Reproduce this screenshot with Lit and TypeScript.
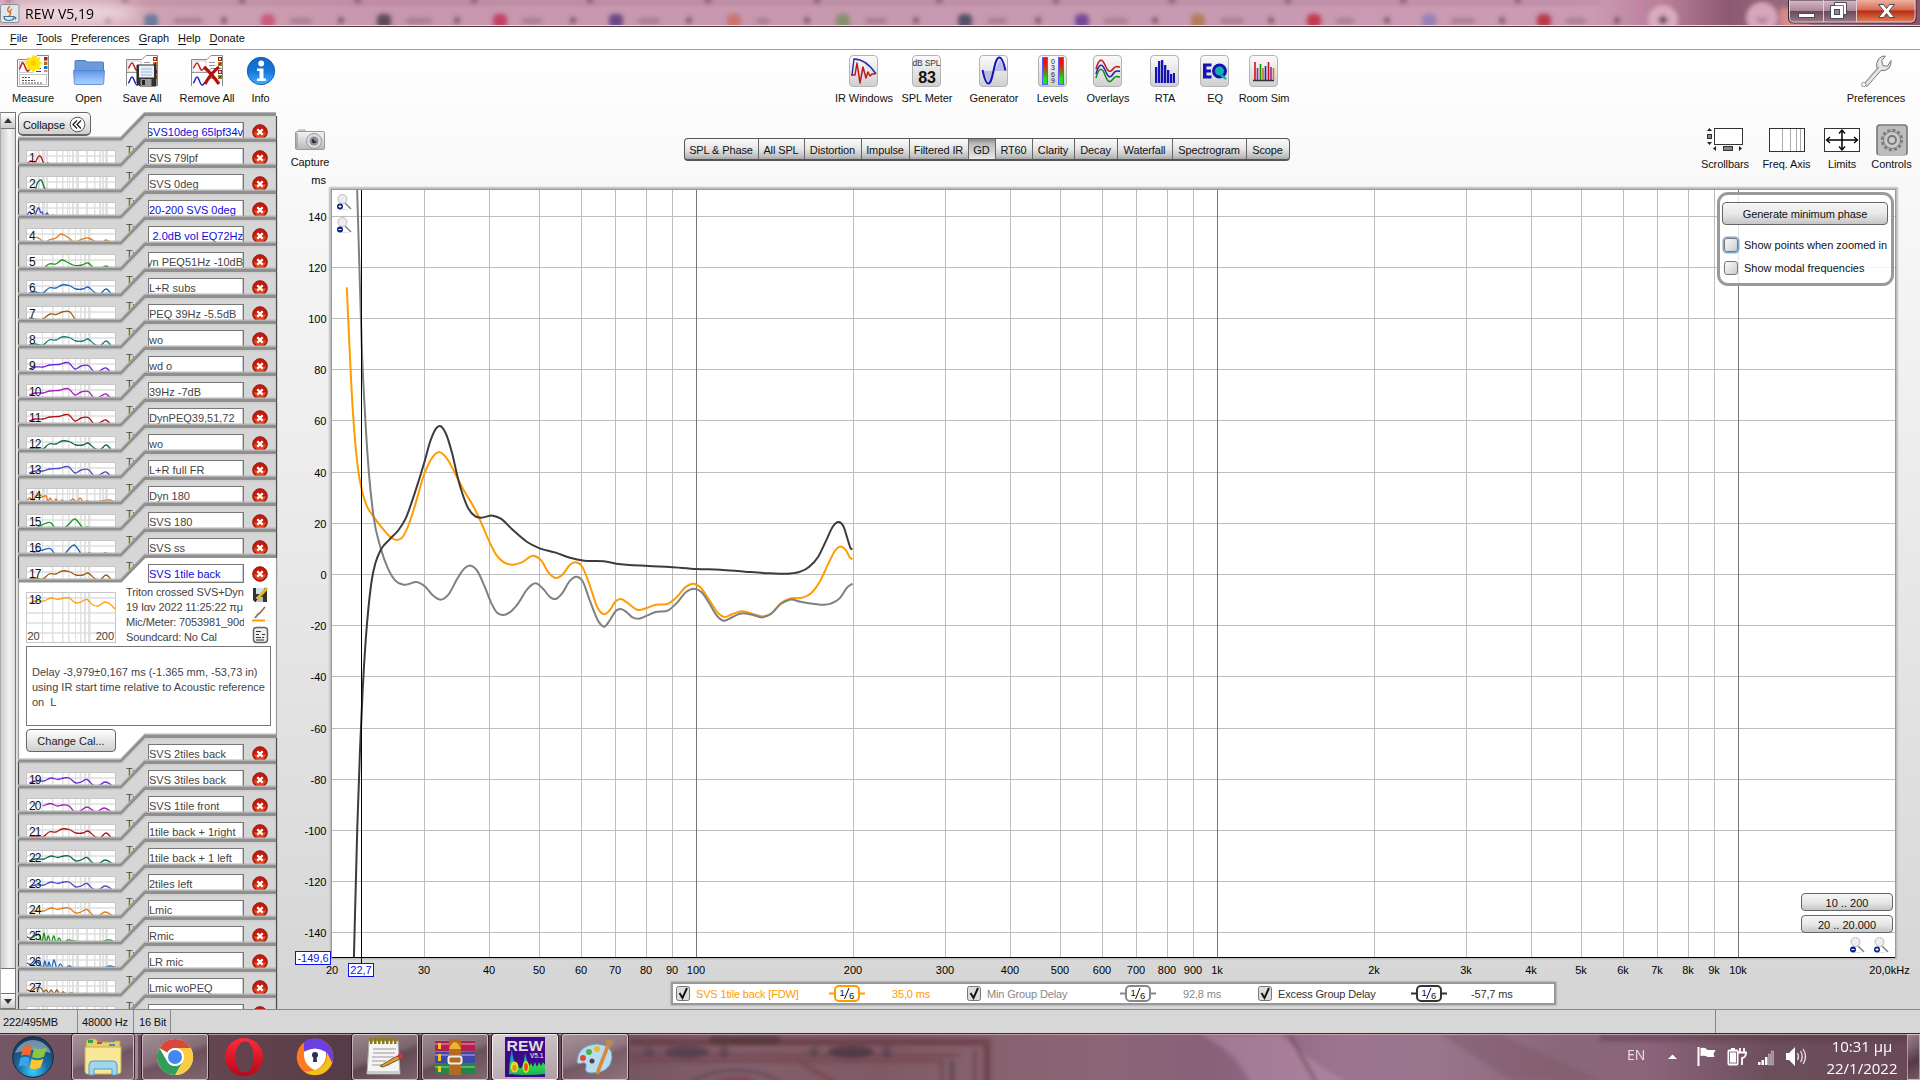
import { LitElement, html, svg, css } from "lit";
import { customElement, property } from "lit/decorators.js";

type Pt = [number, number];

/** Cubic Hermite curve through a flat list of coordinates with ascending x. */
function smooth(flat: number[]): string {
  const p: Pt[] = [];
  for (let i = 0; i < flat.length; i += 2) p.push([flat[i], flat[i + 1]]);
  const n = p.length;
  const slope = (i: number) => {
    if (i === 0) return (p[1][1] - p[0][1]) / (p[1][0] - p[0][0]);
    if (i === n - 1) return (p[i][1] - p[i - 1][1]) / (p[i][0] - p[i - 1][0]);
    const h0 = p[i][0] - p[i - 1][0], h1 = p[i + 1][0] - p[i][0];
    const d0 = (p[i][1] - p[i - 1][1]) / h0, d1 = (p[i + 1][1] - p[i][1]) / h1;
    return (d0 * h1 + d1 * h0) / (h0 + h1);
  };
  let d = `M${p[0][0]},${p[0][1]}`;
  for (let i = 0; i < n - 1; i++) {
    const b = p[i], c = p[i + 1], h = (c[0] - b[0]) / 3;
    d += `C${(b[0] + h).toFixed(2)},${(b[1] + h * slope(i)).toFixed(2)} ${(c[0] - h).toFixed(2)},${(c[1] - h * slope(i + 1)).toFixed(2)} ${c[0]},${c[1]}`;
  }
  return d;
}

/* ---------- measurement data ---------- */

const SHAPES: Record<string, number[][]> = {
  a: [[1, 14, 5, 11, 8, 14, 10, 11, 13, 6, 15, 7, 18, 14, 20, 15, 22, 13, 24, 16, 27, 15, 28, 17]],
  b: [[1, 16, 9, 15, 11, 8, 13, 5, 16, 5, 18, 11, 22, 15]],
  c: [[1, 13, 4, 10, 6, 14, 9, 13, 13, 6, 15, 11, 16, 10, 18, 15, 21, 11, 24, 16, 27, 13, 29, 16]],
  d: [[10, 9, 14, 11, 18, 15, 23, 12, 30, 10, 35, 6, 38, 7, 43, 10, 48, 14, 54, 12, 62, 10, 70, 14, 75, 16, 80, 12, 85, 15]],
  e: [[3, 14, 9, 14, 17, 14.5, 23, 10, 30, 10, 36, 6, 41, 8, 47, 11, 56, 11, 62, 9, 68, 14, 74, 15, 80, 12, 85, 15]],
  f: [[3, 13, 9, 12, 17, 13, 23, 8, 30, 8, 36, 5, 43, 5.5, 50, 9, 57, 9, 62, 7, 68, 12, 74, 14, 80, 9, 87, 16]],
  g: [[3, 12, 17, 13, 24, 8, 30, 8.5, 36, 6, 44, 6, 50, 14, 52, 15, 60, 15]],
  h: [[3, 11, 9, 9, 17, 9, 24, 7, 33, 6.5, 43, 5, 49, 11, 55, 8, 63, 8, 69, 15, 75, 12, 80, 10, 86, 16]],
  n: [[1, 12, 4, 10, 7, 12, 10, 8, 14, 7, 17, 9, 20, 8, 22, 13, 24, 10, 27, 15, 30, 11, 33, 15.5, 36, 12, 39, 15.5, 43, 14, 47, 11, 51, 14, 54, 10, 58, 15, 61, 13, 66, 15.5, 75, 13, 84, 12, 89, 14]],
  o: [[5, 15, 12, 13, 18, 10, 25, 9, 30, 16], [37, 16, 43, 10, 49, 5, 53, 9, 57, 14, 61, 13, 66, 16], [76, 15.5, 80, 15, 84, 15.5]],
  p: [[3, 16, 9, 12, 17, 10, 25, 9, 30, 16], [37, 16, 43, 9, 48, 5, 52, 9, 56, 16], [59, 15.5, 63, 13, 68, 16], [74, 16, 79, 13, 85, 16]],
  q: [[3, 11, 9, 9, 18, 9, 25, 6, 32, 7.5, 38, 6, 43, 6, 50, 11, 55, 10, 61, 7.5, 67, 13, 72, 14, 79, 10, 84, 12, 89, 17]],
  r: [[17, 8, 24, 5.5, 32, 8, 36, 7, 43, 8, 49, 14, 52, 14, 61, 9, 70, 14, 78, 10, 87, 15]],
  s: [[1, 9, 6, 10, 10, 7, 14, 8, 16, 15, 18, 5, 20, 15, 22, 8, 25, 15.5, 28, 8, 30, 15, 33, 10, 36, 15, 42, 12, 48, 13, 58, 15.5], [73, 15.5, 78, 13, 84, 12, 89, 14]],
  t: [[1, 9, 6, 11, 10, 8, 14, 10, 17, 14, 19, 7, 21, 15.5, 23, 8, 25, 15, 28, 6, 31, 15, 34, 10, 38, 15, 43, 12, 50, 15.5, 56, 14, 62, 15.5], [73, 15.5, 80, 13, 84, 12, 89, 13]],
  u: [[1, 10, 6, 11, 10, 8, 15, 8, 18, 12, 20, 10, 23, 13, 25, 10, 28, 14, 31, 10, 34, 15, 37, 12, 41, 15, 45, 13, 50, 15, 58, 16], [80, 15.5, 84, 15]],
};

const RED = "#b30f14", GREEN = "#0c6b3e", INDIGO = "#4c49c4", ORANGE = "#e07b12", LIME = "#109a14", BLUE = "#1466bf", BROWN = "#9c5a12", TEAL = "#15807c", VIOLET = "#6d22dc", MAGENTA = "#a81bbd", AMBER = "#ff9e0a";

interface Measurement { n: number; name: string; color: string; shape: string; wide?: boolean; changed?: boolean; end?: boolean; open?: boolean; }

const M = (n: number, name: string, color: string, shape: string, o: Partial<Measurement> = {}): Measurement => ({ n, name, color, shape, ...o });

const MEASUREMENTS: Measurement[] = [
  M(1, "SVS10deg 65lpf34v", RED, "a", { wide: true, changed: true, end: true }),
  M(2, "SVS 79lpf", GREEN, "b", { wide: true }),
  M(3, "SVS 0deg", INDIGO, "c", { wide: true }),
  M(4, "20-200 SVS 0deg", ORANGE, "d", { changed: true }),
  M(5, "n 2.0dB vol EQ72Hz", LIME, "e", { changed: true, end: true }),
  M(6, "Dyn PEQ51Hz -10dB", BLUE, "f", { end: true }),
  M(7, "L+R subs", BROWN, "g"),
  M(8, "PEQ 39Hz -5.5dB", TEAL, "f"),
  M(9, "wo", VIOLET, "h"),
  M(10, "wd o", MAGENTA, "h"),
  M(11, "39Hz -7dB", RED, "h"),
  M(12, "DynPEQ39,51,72", GREEN, "f"),
  M(13, "wo", INDIGO, "h"),
  M(14, "L+R full FR", ORANGE, "n", { wide: true }),
  M(15, "Dyn 180", LIME, "o"),
  M(16, "SVS 180", BLUE, "p"),
  M(17, "SVS ss", BROWN, "f"),
  M(18, "SVS 1tile back", AMBER, "q", { changed: true, open: true }),
  M(19, "SVS 2tiles back", VIOLET, "q"),
  M(20, "SVS 3tiles back", MAGENTA, "r"),
  M(21, "SVS 1tile front", RED, "f"),
  M(22, "1tile back + 1right", GREEN, "q"),
  M(23, "1tile back + 1 left", INDIGO, "q"),
  M(24, "2tiles left", ORANGE, "q"),
  M(25, "Lmic", LIME, "s", { wide: true }),
  M(26, "Rmic", BLUE, "t", { wide: true }),
  M(27, "LR mic", BROWN, "u", { wide: true }),
  M(28, "Lmic woPEQ", TEAL, "", { wide: true }),
  M(29, "", RED, ""),
];

const TRACE_GD = [75, 322, 80, 440, 87, 600, 95, 740, 105, 855, 117, 930, 130, 975, 150, 1010, 175, 1045, 200, 1074, 214, 1080, 230, 1073, 248, 1035, 265, 980, 290, 888, 310, 840, 333, 816, 355, 835, 385, 895, 405, 935, 430, 980, 450, 1025, 475, 1087, 495, 1127, 515, 1147, 540, 1154, 565, 1147, 598, 1127, 620, 1142, 640, 1178, 660, 1194, 680, 1183, 700, 1154, 716, 1147, 733, 1158, 755, 1215, 778, 1285, 796, 1303, 812, 1290, 828, 1264, 842, 1257, 860, 1268, 890, 1290, 915, 1284, 940, 1274, 975, 1271, 1000, 1250, 1025, 1220, 1045, 1211, 1065, 1222, 1090, 1260, 1115, 1300, 1132, 1311, 1155, 1302, 1180, 1294, 1210, 1301, 1242, 1309, 1265, 1300, 1290, 1270, 1315, 1256, 1350, 1253, 1375, 1240, 1400, 1204, 1425, 1147, 1445, 1108, 1460, 1100, 1473, 1111, 1484, 1133, 1491, 1138];
const TRACE_MIN = [104, 29, 110, 250, 117, 500, 127, 720, 137, 880, 150, 1010, 170, 1105, 190, 1165, 210, 1201, 235, 1214, 275, 1207, 295, 1220, 315, 1245, 337, 1259, 360, 1243, 385, 1195, 405, 1165, 422, 1157, 440, 1172, 460, 1217, 480, 1270, 495, 1297, 511, 1305, 530, 1298, 555, 1270, 580, 1228, 604, 1210, 625, 1227, 645, 1252, 660, 1257, 678, 1240, 700, 1202, 719, 1190, 735, 1203, 755, 1260, 780, 1325, 796, 1340, 812, 1320, 828, 1293, 842, 1287, 858, 1296, 875, 1312, 892, 1316, 915, 1307, 940, 1296, 975, 1291, 1000, 1268, 1025, 1236, 1047, 1226, 1068, 1236, 1090, 1270, 1112, 1308, 1130, 1322, 1150, 1314, 1175, 1301, 1210, 1304, 1240, 1312, 1262, 1302, 1290, 1272, 1315, 1259, 1345, 1265, 1380, 1271, 1430, 1271, 1455, 1255, 1478, 1220, 1491, 1211];
const TRACE_EXCESS = [95, 2331, 104.5, 1940, 112, 1710, 119.5, 1530, 128, 1380, 136, 1280, 145, 1200, 155, 1150, 170, 1110, 195, 1078, 220, 1050, 240, 1015, 265, 940, 290, 855, 310, 780, 325, 745, 336, 738, 350, 755, 370, 820, 385, 890, 400, 945, 415, 985, 435, 1009, 448, 1013, 484, 1007, 505, 1015, 540, 1050, 580, 1086, 615, 1105, 660, 1118, 700, 1133, 740, 1142, 795, 1144, 830, 1151, 920, 1158, 980, 1161, 1055, 1167, 1120, 1169, 1190, 1175, 1260, 1180, 1310, 1181, 1345, 1175, 1370, 1160, 1395, 1130, 1420, 1075, 1437, 1038, 1453, 1026, 1466, 1040, 1478, 1080, 1486, 1105, 1491, 1108];

/* ---------- toolbar glyphs ---------- */

const plate = svg`<rect x="1.500" y=".5" width="28" height="31" rx="3.500" fill="url(#plate)" stroke="#b4b4b4"/>`;
const plateDef = svg`<defs><linearGradient id="plate" x2="0" y2="1"><stop offset="0" stop-color="#fbfbfb"/><stop offset="1" stop-color="#cfcfcf"/></linearGradient></defs>`;

const chips = (y: number) => svg`
  <rect x="27" y=${y} width="4" height="4" fill="#b01818"/><rect x="27" y=${y + 5} width="4" height="4" fill="#a87a08"/>
  <path d=${`M28 ${y + 1}l2 2M30 ${y + 1}l-2 2`} stroke="#fff" stroke-width=".8"/><path d=${`M28 ${y + 8}l2-2`} stroke="#222"/>`;

const stackedCards = svg`
  <path d="M.5 31V4.500H16l4-4H31.500V31" fill="#fff" stroke="#888"/>
  <path d="M.5 17.500H16l4-4H31.500" fill="none" stroke="#888"/>
  <rect x="2" y="6" width="13" height="11" fill="#fff" stroke="#bbb" stroke-width=".7"/>
  <path d="M2 13c2 0 2-5 4-5s3 8 5 7 2-3 4-3" fill="none" stroke="#d02020" stroke-width="1.500"/>
  <path d="M2 28c2 0 2-6 4-6s3 8 5 8 2-3 4-3" fill="none" stroke="#2222c0" stroke-width="1.500"/>
  <path d="M18 7.500h6M18 10.500h6M18 23.500h6" stroke="#999"/>
  ${chips(2)}${chips(15)}`;

const ICONS: Record<string, unknown> = {
  measure: svg`
    <path d="M.5 31.500V4.500H16l4-4H31.500V31.500z" fill="#fff" stroke="#888"/>
    <rect x="2.500" y="6.500" width="14" height="11" fill="#fff" stroke="#ccc"/>
    <path d="M2 14c2 0 2-7 4-6s3 9 5 8 3-6 5-5" fill="none" stroke="#c81e1e" stroke-width="1.600"/>
    <path d="M19 13.500h5M19 16.500h5" stroke="#444"/>
    <rect x="2.500" y="19.500" width="27" height="10" fill="#fff" stroke="#c4c4c4"/>
    <path d="M5 22.500h8M5 25.500h13M5 28h20" stroke="#555" stroke-dasharray="2 1"/>
    <rect x="27" y="2" width="3.500" height="3.500" fill="#b01818"/><rect x="27" y="6.500" width="3.500" height="3.500" fill="#a87a08"/><rect x="27" y="11" width="3.500" height="3" fill="#1773c8"/><path d="M27 16h3.500" stroke="#c03"/>
    <path d="M16.500 1l1.800 3.300 3.800-1-1 3.700 2.900 1.500-2.900 1.800 1 3.700-3.800-.9-1.800 3-1.900-3-3.700.9.900-3.700-2.900-1.800 2.900-1.500-.9-3.700 3.700 1z" fill="#ffe600" stroke="#ffe600" stroke-width="2" stroke-linejoin="round"/>
    <circle cx="16.500" cy="8" r="2.600" fill="#ffc800"/>`,
  open: svg`
    <defs><linearGradient id="fo" x2="0" y2="1"><stop offset="0" stop-color="#5e93e2"/><stop offset=".5" stop-color="#8ab8f6"/><stop offset="1" stop-color="#a9d0ff"/></linearGradient></defs>
    <path d="M2 18V6.500Q2 5.500 3 5.500H12q1 0 1.500 1.500h16q1 0 1 1V18z" fill="#6c9bdc" stroke="#4b7cc4"/>
    <path d="M.5 15.500h31l-.8 12.500q-.1 1.500-1.500 1.500H2.800q-1.400 0-1.500-1.500z" fill="url(#fo)" stroke="#4b7fd0" stroke-width=".8"/>`,
  saveall: svg`${stackedCards}
    <path d="M11 10h19v21H14l-3-3z" fill="#333" stroke="#222"/><rect x="13" y="10.500" width="15" height="12" fill="#e9f0fa"/>
    <path d="M15 14h11M15 17h11M15 20h11" stroke="#9db8d8"/><rect x="14.500" y="24" width="11" height="7" fill="#9a9a9a"/><rect x="16" y="25" width="3" height="5" fill="#222"/>`,
  removeall: svg`${stackedCards}<path d="M13 12q7 6 15 17M28 12q-8 6-14 17" fill="none" stroke="#b30f0f" stroke-width="3.200"/>`,
  info: svg`
    <defs><linearGradient id="inf" x2="0" y2="1"><stop offset="0" stop-color="#1666c4"/><stop offset=".5" stop-color="#1477dc"/><stop offset="1" stop-color="#3fb0ff"/></linearGradient></defs>
    <circle cx="16" cy="16" r="13.700" fill="url(#inf)" stroke="#1560b0"/><circle cx="16.200" cy="8.500" r="2.900" fill="#fff"/><path d="M12 13.500h6.500v10H21V26H12v-2.500h2.500v-7.500H12z" fill="#fff"/>`,
  ir: svg`${plate}<path d="M3 20h1l2-16q12 0 22 15" fill="none" stroke="#2a2ab4" stroke-width="1.400"/><path d="M4 20h3l2-12 3 20 3-16 3 11 2-6 2 4 2-2h3" fill="none" stroke="#c31616" stroke-width="1.500" stroke-linejoin="round"/>`,
  spl: svg`${plate}<text x="15.500" y="10.500" font-size="8.500" text-anchor="middle" textLength="28" fill="#333">dB SPL</text><text x="16" y="28" font-size="16" font-weight="700" text-anchor="middle" fill="#111">83</text>`,
  gen: svg`${plate}<path d="M5 16h11l-5 12z" fill="#b9bce0"/><path d="M16 16h11L22 4z" fill="#b9bce0"/><path d="M4.500 15q3 14 6 13.500c5-.5 5-26 11-26q3 0 6 13" fill="none" stroke="#1414c0" stroke-width="2"/>`,
  levels: svg`${plate}<defs><linearGradient id="lv" x2="0" y2="1"><stop offset=".2" stop-color="#f01010"/><stop offset=".55" stop-color="#7c7c10"/><stop offset=".8" stop-color="#10e818"/></linearGradient></defs>
    <rect x="5.500" y="2.500" width="5" height="27" fill="url(#lv)" stroke="#5a5aff"/><rect x="21.500" y="2.500" width="5" height="27" fill="url(#lv)" stroke="#5a5aff"/>
    <g font-size="7" text-anchor="middle" fill="#222"><text x="16" y="8.500">0</text><text x="16" y="15">3</text><text x="16" y="21.500">6</text><text x="16" y="28">9</text></g>`,
  overlays: svg`${plate}<g fill="none" stroke-width="1.500"><path d="M4 14c3-11 6-11 9-4s5 8 8 4 4-2 7-2" stroke="#c31616"/><path d="M4 19c3-11 6-11 9-4s5 9 8 4 4-2 7-3" stroke="#2222b8"/><path d="M4 23c3-11 6-11 9-3s5 8 8 4 4-2 7-2" stroke="#109010"/></g>`,
  rta: svg`${plate}<g fill="#1414b4"><rect x="6" y="12" width="2.300" height="16"/><rect x="9" y="6" width="2.300" height="22"/><rect x="12" y="5" width="2.300" height="23"/><rect x="15" y="10" width="2.300" height="18"/><rect x="18" y="15" width="2.300" height="13"/><rect x="21" y="19" width="2.300" height="9"/><rect x="24" y="18" width="2" height="10"/></g>`,
  eq: svg`${plate}<path d="M4 8.500h8.500v3H7.500v3h4.500v3H7.500v3h5v3H4z" fill="#1414b0"/><circle cx="20.500" cy="16" r="6" fill="#10b0b0" stroke="#1414b0" stroke-width="3"/><path d="M22 20l5 4" stroke="#10b0b0" stroke-width="2.500"/>`,
  room: svg`${plate}<path d="M5 25.500h21" stroke="#333" stroke-width="1.500"/><g stroke-width="1.600"><path d="M7 7v18" stroke="#c01818"/><path d="M9.500 13v12" stroke="#b010b0"/><path d="M12.500 9v16" stroke="#109010"/><path d="M15 13v12" stroke="#c07810"/><path d="M17.500 11v14" stroke="#2020b8"/><path d="M20.500 7v18" stroke="#c01818"/><path d="M23 12v13" stroke="#b010b0"/><path d="M25.500 13v12" stroke="#c08810"/></g>`,
  wrench: svg`<path d="M2.500 31L17 13.500Q15.500 8.500 18.500 4q3-3.500 7-3l-3.800 4.700 1.300 5 4.600.3L31 5.500q.5 4.500-2 7.500-3.500 3.500-8 2.500L6.500 32" fill="#e6e6e6" stroke="#777" stroke-width="1"/><path d="M5 28L19 12" stroke="#aaa" stroke-width="1.400"/><circle cx="3.800" cy="29.500" r="2.200" fill="#fff" stroke="#777" stroke-width=".8"/>`,
};

const glyph = (name: string) => html`<svg class="glyph" width="32" height="32" viewBox="0 0 32 32">${plateDef}${ICONS[name]}</svg>`;

/* ---------- one measurement card ---------- */

@customElement("measurement-card")
class MeasurementCard extends LitElement {
  @property({ attribute: false }) item!: Measurement;

  static styles = css`
    :host { display: block; position: relative; height: 26px; font: 11px "Liberation Sans", Arial, sans-serif; color: #444; }
    :host([open]) { height: 180px; }
    .shape { position: absolute; left: 0; top: 0; overflow: visible; pointer-events: none; }
    .content { position: relative; padding: 7px 8px 0 130px; }
    .tab { display: flex; gap: 8px; align-items: center; }
    .name { box-sizing: border-box; width: 96px; height: 19px; border: 1px solid #777; box-shadow: inset -1px -1px #ccc; background: #fff; display: flex; align-items: center; overflow: hidden; white-space: nowrap; }
    .name.end { justify-content: flex-end; }
    .changed { color: #0b0be0; }
    .details { display: flex; margin: 3px -1px 0 -22px; height: 58px; justify-content: space-between; }
    .lines { width: 118px; overflow: hidden; white-space: nowrap; line-height: 15px; margin-top: -1px; letter-spacing: -.12px; }
    .tools { width: 17px; margin-top: 1px; }
    .notes { box-sizing: border-box; margin: 2px -3px 0 -122px; width: 245px; height: 80px; border: 1px solid #777; padding: 18px 5px 0; line-height: 15px; white-space: pre; }
    .cal { margin: 3px 0 0 -122px; box-sizing: border-box; width: 90px; height: 23px; border: 1px solid #666; border-radius: 4px; background: linear-gradient(#fff, #cfcfcf); color: #222; display: flex; align-items: center; justify-content: center; }
  `;

  private thumb(m: Measurement) {
    const h = m.open ? 50 : 17;
    const bars = m.wide
      ? [[8, 1], [10, 1], [12, 2], [16, 3], [20, 2], [30, 1.5], [36, 1.5], [41, 1], [43, 1], [46, 2], [50, 3], [60, 2], [68, 1.5], [73, 2], [76, 2], [79, 3]]
      : [[16, 1], [26, 1.5], [36, 1.5], [42, 1.5], [49, 1], [54, 1.5], [58, 2], [62, 2.5]];
    return svg`
      <g transform="translate(8,35)">
        <rect x=".5" y=".5" width="89" height=${h} fill="#fff" stroke="#c6c6c6"/>
        ${bars.map(([x, w]) => svg`<rect x=${x} y="1" width=${w} height=${h - 1} fill="#e1e1e1"/>`)}
        <path d="M1 6H89${m.open ? "M1 21H89M1 31H89M1 41H89" : ""}" stroke="#dedede" stroke-width="1.500"/>
        ${m.open ? svg`<text x="1.500" y="48" font-size="11" fill="#444">20</text><text x="88" y="48" font-size="11" text-anchor="end" fill="#444">200</text>` : ""}
        ${(SHAPES[m.shape] ?? []).map((s) => svg`<path d=${smooth(s)} fill="none" stroke=${m.color} stroke-width="1.300"/>`)}
        ${m.shape ? svg`<text x="3" y="12" font-size="12" fill="#111" textLength=${m.n > 9 ? 12.5 : 6}>${m.n}</text>` : ""}
        ${m.n < 11 ? svg`<path d="M3 13.500h${m.n > 9 ? 12 : 6}" stroke="#111" stroke-width=".8"/>` : ""}
      </g>`;
  }

  render() {
    const m = this.item;
    const bottom = m.open ? 205 : 51;
    const edge = "M0,25H103L127,0H258";
    return html`
      <svg class="shape" width="258" height=${bottom}>
        <path d=${edge} transform="translate(0,-2.500)" fill="none" stroke="#b4b4b4" stroke-width="2"/>
        <path d=${edge} transform="translate(0,-.5)" fill="none" stroke="#8f8f8f" stroke-width="3"/>
        <path d=${`M1,25.500H103.500L127.500,1H258V${bottom}H1Z`} fill=${m.open ? "#fff" : "#d6d6d6"}/>
        <path d=${`M.5,25V${bottom}M258.500,1V${bottom}`} stroke=${m.open ? "#999" : "#4c4c4c"} stroke-width="1.200"/>
        <path d=${m.open ? "M0 0" : "M1.5,26.500H104L128,2H257"} fill="none" stroke="#c8c8c8"/>
        ${this.thumb(m)}
        ${m.open ? "" : svg`<text x="108" y="39" font-size="11" fill="#4c4c4c">Tri</text>`}
      </svg>
      <div class="content">
        <div class="tab">
          <div class="name ${m.end ? "end" : ""} ${m.changed ? "changed" : ""}">${m.name}</div>
          <svg width="16" height="16" viewBox="0 0 16 16">
            <circle cx="8" cy="8" r="7.300" fill="#c4190d" stroke="#8e1d10"/><path d="M2 8a6 6 0 0 0 12 0z" fill="#e2461d"/>
            <path d="M5.300 5.300l5.400 5.400M10.700 5.300l-5.400 5.400" stroke="#fff" stroke-width="2.300"/>
          </svg>
        </div>
        ${m.open ? html`
          <div class="details">
            <div class="lines">Triton crossed SVS+Dyn<br/>19 Ιαν 2022 11:25:22 πμ<br/>Mic/Meter: 7053981_90d<br/>Soundcard: No Cal</div>
            <svg class="tools" height="58" viewBox="0 0 17 58">
              <path d="M1 1h14v14H3L1 13z" fill="#333"/><rect x="4" y="1" width="8" height="6" fill="#cfe0ef"/><rect x="4" y="10" width="7" height="5" fill="#bbb"/><path d="M15 1L5 12" stroke="#e8b820" stroke-width="3"/><path d="M5 12l-2 2" stroke="#222" stroke-width="1.500"/>
              <path d="M13 20l-6 7" stroke="#b05050" stroke-width="1.500"/><path d="M7 26l-4 5" stroke="#777" stroke-width="2"/><path d="M0 33.500h13" stroke="#ff9a00" stroke-width="2"/>
              <rect x="1.500" y="40.500" width="14" height="15" rx="3" fill="#eee" stroke="#666" stroke-width="1.500"/><path d="M4 44.500h5M4 47.500h3M4 50.500h5M4 53h8M10 47.500h3M10 50.500h2" stroke="#333"/>
            </svg>
          </div>
          <div class="notes">Delay -3,979±0,167 ms (-1.365 mm, -53,73 in)
using IR start time relative to Acoustic reference
on  L</div>
          <div class="cal">Change Cal...</div>` : ""}
      </div>`;
  }
}

/* ---------- group delay chart ---------- */

const OX = 280, OY = 172;
const fx = (f: number) => Math.round(332 + 521 * Math.log10(f / 20)) - OX + 0.5;
const fy = (v: number) => Math.floor(574.5 - v * 2.5585) - OY + 0.5;

@customElement("delay-chart")
class DelayChart extends LitElement {
  static styles = css`
    :host { display: block; position: relative; width: 1640px; height: 805px; font: 11px "Liberation Sans", Arial, sans-serif; color: #111; }
    .canvas { display: block; }
    .panel { position: absolute; right: 26px; top: 20px; box-sizing: border-box; width: 177px; height: 94px; border: 3px solid #9a9a9a; border-radius: 11px; background: rgba(255,255,255,.82); padding: 7px 0 0 2px; display: flex; flex-direction: column; }
    .btn { box-sizing: border-box; border: 1px solid #666; border-radius: 4px; background: linear-gradient(#f6f6f6, #e8e8e8 50%, #c6c6c6); display: flex; align-items: center; justify-content: center; letter-spacing: -.1px; }
    .gen { width: 166px; height: 23px; margin-bottom: 8px; }
    .opt { display: flex; align-items: center; gap: 6px; height: 23px; padding-left: 2px; white-space: nowrap; }
    .box { box-sizing: border-box; width: 14px; height: 14px; border: 1px solid #777; border-radius: 3px; background: linear-gradient(135deg, #fafafa, #ccc); }
    .box.focus { box-shadow: 0 0 0 1.500px #79aee0; }
    .ranges { position: absolute; right: 27px; top: 721px; display: flex; flex-direction: column; gap: 4px; align-items: flex-end; }
    .range { width: 92px; height: 18px; padding-top: 2px; letter-spacing: 0; }
    .zooms { display: flex; gap: 9px; padding-right: 4px; }
    .vzooms { position: absolute; left: 57px; top: 22px; display: flex; flex-direction: column; gap: 7px; }
  `;

  private zoom(plus: boolean) {
    return html`<svg width="15" height="16" viewBox="0 0 15 16"><path d="M8 9l6 6" stroke="#888" stroke-width="1.600"/><path d="M2 15.500h9" stroke="#e2e2e2"/><circle cx="5.500" cy="5" r="4.500" fill="#ececf2" stroke="#bbb"/><circle cx="3" cy="12.500" r="3" fill="#0b2384"/><path d=${plus ? "M1.5 12.5h3M3 11v3" : "M1.5 12.5h3"} stroke="#fff" stroke-width="1"/></svg>`;
  }

  render() {
    const freqs: number[] = [];
    for (const dec of [10, 100, 1000, 10000]) for (let i = 1; i < 10; i++) { const f = i * dec; if (f > 20 && f < 20000) freqs.push(f); }
    const ys = [140, 120, 100, 80, 60, 40, 20, 0, -20, -40, -60, -80, -100, -120, -140];
    const x0 = 332 - OX, x1 = 1895 - OX, y0 = 190 - OY, y1 = 957 - OY;
    const label = (f: number) => (f >= 1000 ? `${f / 1000}k` : `${f}`);
    return html`
      <svg class="canvas" width="1640" height="805">
        <text x="46" y="12" text-anchor="end" font-size="11">ms</text>
        <rect x=${x0 - 3.5} y=${y0 - 3.5} width="1570" height="774" rx="2" fill="#dadada"/>
        <rect x=${x0 - 2.5} y=${y0 - 2.5} width="1568" height="772" rx="1" fill="#bdbdbd"/>
        <rect x=${x0 - 1} y=${y0 - 1} width="1565" height="769" fill="#9a9a9a"/>
        <rect x=${x0} y=${y0} width=${x1 - x0} height=${y1 - y0} fill="#fff"/>
        ${ys.map((v) => svg`<path d=${`M${x0} ${fy(v)}H${x1}`} stroke="#bdbdbd"/><text x="46.500" y=${fy(v) + 4.5} text-anchor="end">${v}</text>`)}
        ${freqs.map((f) => svg`<path d=${`M${fx(f)} ${y0}V${y1}`} stroke=${[100, 1000, 10000].includes(f) ? "#777" : "#bdbdbd"}/><text x=${fx(f) - 0.5} y="802" text-anchor="middle">${label(f)}</text>`)}
        <text x="52" y="802" text-anchor="middle">20</text>
        <text x="1609.500" y="802" text-anchor="middle">20,0kHz</text>
        <svg x="40" y="8" width="560" height="777" viewBox="0 0 1568 2331" preserveAspectRatio="none">
          <g fill="none" stroke-width="2">
            <path vector-effect="non-scaling-stroke" d=${smooth(TRACE_GD)} stroke="#ff9c00"/>
            <path vector-effect="non-scaling-stroke" d=${smooth(TRACE_MIN)} stroke="#808080"/>
            <path vector-effect="non-scaling-stroke" d=${smooth(TRACE_EXCESS)} stroke="#3c3c3c"/>
          </g>
        </svg>
        <path d="M81.500 18V791M52 785.500H1615" stroke="#000"/>
        <rect x="15.500" y="779.500" width="35" height="13" fill="#fff" stroke="#1010e8"/><text x="33" y="790" text-anchor="middle" fill="#1010e8">-149,6</text>
        <rect x="68.500" y="791.500" width="25" height="13" fill="#fff" stroke="#1010e8"/><text x="81" y="802" text-anchor="middle" fill="#1010e8">22,7</text>
      </svg>
      <div class="vzooms">${this.zoom(true)}${this.zoom(false)}</div>
      <div class="panel">
        <div class="btn gen">Generate minimum phase</div>
        <div class="opt"><span class="box focus"></span>Show points when zoomed in</div>
        <div class="opt"><span class="box"></span>Show modal frequencies</div>
      </div>
      <div class="ranges">
        <div class="btn range">10 .. 200</div>
        <div class="btn range">20 .. 20.000</div>
        <div class="zooms">${this.zoom(false)}${this.zoom(true)}</div>
      </div>`;
  }
}

/* ---------- application ---------- */

@customElement("app-root")
class AppRoot extends LitElement {
  static styles = css`
    :host { display: flex; flex-direction: column; width: 1920px; height: 1080px; overflow: hidden; font: 11px "Liberation Sans", Arial, sans-serif; color: #111; }
    .titlebar { position: relative; height: 27px; box-sizing: border-box; border-bottom: 1px solid #4d3540; display: flex; background: #c799ae; flex: none; }
    .aero { position: absolute; inset: 0; }
    .caption { position: relative; display: flex; gap: 5px; align-items: center; width: 220px; height: 26px; font: 14px "Open Sans", "Noto Sans", sans-serif; color: #000; }
    .winbtns { position: relative; margin-left: auto; margin-right: 3px; height: 24px; }
    .menubar { height: 22px; box-sizing: content-box; border-bottom: 1px solid #9c9ca8; display: flex; align-items: center; gap: 9px; padding-left: 10px; background: #fff; flex: none; letter-spacing: -.05px; }
    .menubar u { text-underline-offset: 2px; }
    .main { height: 959px; flex: none; background: linear-gradient(#fff, #f8f8f8 15%, #d6d6d6 98%); display: flex; flex-direction: column; }
    .toolbar { display: flex; height: 57px; padding-top: 5px; letter-spacing: -.08px; }
    .tools { display: grid; }
    .left { grid-template-columns: 56px 55px 52px 78px 29px; padding-left: 5px; }
    .mid { grid-template-columns: 70px 56px 78px 39px 72px 42px 58px 40px; margin-left: 554px; }
    .right { margin-left: auto; padding-right: 12px; grid-template-columns: 64px; }
    .tool { display: flex; flex-direction: column; align-items: center; white-space: nowrap; min-width: 0; }
    .tool span { margin-top: 4px; line-height: 14px; }
    .body { display: flex; flex: 1; min-height: 0; }
    .scroll { width: 16px; box-sizing: border-box; border: 1px solid #777; border-left-color: #aaa; background: linear-gradient(90deg, #ccc, #f4f4f4 60%, #ddd); display: flex; flex-direction: column; }
    .arrow { height: 15px; display: flex; align-items: center; justify-content: center; background: linear-gradient(#fff, #ccc); border-bottom: 1px solid #777; }
    .arrow.down { border: 0; border-top: 1px solid #777; height: 14px; }
    .rail { flex: 1; }
    .thumb { height: 24px; background: #fff; border-top: 1px solid #777; }
    .list { position: relative; width: 262px; padding: 3px 0 0 2px; box-sizing: border-box; overflow: hidden; }
    .cards { width: 258px; }
    .collapse { position: absolute; left: 2px; top: 0; box-sizing: border-box; width: 73px; height: 24px; border: 1px solid #666; border-bottom-width: 2px; border-radius: 5px; background: linear-gradient(#fdfdfd, #cfcfcf); display: flex; align-items: center; padding: 2px 0 0 4px; gap: 4px; letter-spacing: -.1px; }
    .pane { flex: 1; display: flex; flex-direction: column; margin-left: 2px; }
    .header { display: flex; height: 60px; flex: none; letter-spacing: -.08px; }
    .capture { width: 60px; padding-top: 17px; display: flex; flex-direction: column; align-items: center; }
    .capture span { margin-top: 3px; line-height: 14px; }
    .tabs { margin: 26px 0 0 344px; display: grid; grid-template-columns: 74px 46px 57px 48px 59px 27px 37px 42px 43px 55px 74px 42px; box-sizing: border-box; height: 23px; border: 1px solid #555; border-bottom-width: 2px; border-radius: 4px; overflow: hidden; background: linear-gradient(#fafafa, #e6e6e6 50%, #c2c2c2 85%, #a8a8a8); }
    .tabx { display: flex; align-items: center; justify-content: center; border-right: 1px solid #666; box-sizing: border-box; white-space: nowrap; padding: 2px 1px 0 0; letter-spacing: -.12px; }
    .tabx:last-child { border-right: 0; }
    .tabx.on { background: linear-gradient(#8a8a8a, #bbb 25%, #e8e8e8); }
    .views { margin-left: auto; padding: 12px 4px 0 0; display: grid; grid-template-columns: 62px 61px 50px 49px; }
    .view { display: flex; flex-direction: column; align-items: center; white-space: nowrap; }
    .view span { line-height: 14px; margin-top: 1px; }
    .legend { margin: 5px 0 0 391px; box-sizing: border-box; width: 885px; height: 23px; border: 2px solid #999; background: #fff; box-shadow: 0 0 2px #888; display: grid; grid-template-columns: 291px 291px 291px; padding-left: 3px; letter-spacing: -.15px; }
    .entry { display: grid; grid-template-columns: 20px 133px 63px auto; align-items: center; }
    .entry .val { margin-left: -3px; }
    .status { height: 24px; flex: none; box-sizing: border-box; border-top: 1px solid #888; background: #d7d7d7; display: flex; }
    .cell { box-sizing: border-box; border-right: 1px solid #888; display: flex; align-items: center; padding: 1px 0 0 3px; letter-spacing: -.15px; }
    .c1 { width: 78px; } .c2 { width: 56px; padding-left: 4px; } .c3 { width: 37px; padding-left: 5px; } .c4 { width: 1545px; }
    .taskbar { position: relative; height: 47px; flex: none; box-sizing: border-box; border-top: 1px solid #3b2831; background: linear-gradient(90deg, #745666, #63444f 12%, #563c46 18%, #6e505c 30%, #83606c 38%, #7f5a66 46%, #866270 51%, #8a6677 58%, #87617a 63%, #9c7590 70%, #99758e 75%, #8a6878 81%, #8b647b 86%, #6d4f5c 92%, #6a4857 100%); display: flex; }
    .apps { position: relative; display: grid; grid-template-columns: 72px 70px 70px 68px 72px 70px 70px 70px 66px; height: 46px; }
    .app { display: flex; align-items: center; box-sizing: border-box; height: 46px; padding-left: 12px; }
    .app.run { margin-right: 4px; padding-left: 0; justify-content: center; border: 1px solid rgba(240,225,232,.65); border-radius: 3px; box-shadow: 0 0 0 1px rgba(30,15,22,.75); background: linear-gradient(160deg, rgba(255,255,255,.38), rgba(255,255,255,.2) 45%, rgba(255,255,255,.05) 55%, rgba(255,255,255,.18)); }
    .app.run.first { margin-right: 8px; box-shadow: 0 0 0 1px rgba(30,15,22,.75), 4px 0 0 0 rgba(240,225,232,.4); }
    .app.run.last { margin-right: 0; }
    .app.run.active { background: linear-gradient(160deg, rgba(255,255,255,.75), rgba(255,255,255,.45)); border-color: #f6eef2; }
    .avast { margin-left: 4px; }
    .tray { position: relative; margin-left: auto; display: flex; align-items: center; color: #fff; font: 15px "Open Sans", "Noto Sans", sans-serif; }
    .lang { font-size: 14px; color: #ece2e6; width: 40px; padding-bottom: 5px; }
    .clock { width: 90px; text-align: center; line-height: 22px; font-size: 15px; padding: 0 0 1px 5px; }
    .desk { width: 13px; height: 46px; box-sizing: border-box; border: 1px solid rgba(255,230,240,.5); background: linear-gradient(150deg, rgba(255,255,255,.35), rgba(0,0,0,.2) 60%, rgba(255,255,255,.1)); }
  `;

  private tool(icon: string, label: string) {
    return html`<div class="tool">${glyph(icon)}<span>${label}</span></div>`;
  }

  private aero() {
    const marks = [["#e0a090", 35, 0], ["#4a6b8f", 151, 30], ["#c8486a", 268, 22], ["#3a3238", 384, 26], ["#c4224e", 500, 20], ["#4b2f7c", 616, 22], ["#cc6a5a", 734, 14], ["#6f8f58", 843, 22], ["#2f3a4c", 965, 20], ["#5a2f94", 1082, 24], ["#a8763c", 1198, 24], ["#c01c2c", 1314, 18], ["#8878b8", 1429, 24], ["#b01828", 1544, 20]] as [string, number, number][];
    return html`<svg class="aero" width="1920" height="26">
      <defs><filter id="b3" x="-50%" y="-50%" width="200%" height="200%"><feGaussianBlur stdDeviation="2.200"/></filter><filter id="b8" x="-30%" y="-100%" width="160%" height="300%"><feGaussianBlur stdDeviation="9"/></filter>
      <linearGradient id="tb" x2="1920" y2="0" gradientUnits="userSpaceOnUse"><stop offset="0" stop-color="#d3a9b6"/><stop offset=".2" stop-color="#c797ad"/><stop offset=".55" stop-color="#c79ab1"/><stop offset=".83" stop-color="#cb9bb3"/><stop offset=".87" stop-color="#b57c96"/><stop offset=".9" stop-color="#8c5a70"/><stop offset=".95" stop-color="#a07486"/><stop offset="1" stop-color="#8a5566"/></linearGradient></defs>
      <rect width="1920" height="26" fill="url(#tb)"/>
      <rect width="1600" height="5" fill="#a56f8a" opacity=".35" filter="url(#b3)"/>
      <g filter="url(#b3)">
        ${marks.map(([c, x, w]) => svg`<rect x=${x - 7} y="14" width="14" height="14" rx="5" fill=${c} opacity=".75"/><rect x=${x + 22} y="18" width=${w} height="6" rx="3" fill="#7a5767" opacity=".4"/><rect x=${x + 70} y="17" width="6" height="7" rx="3" fill="#4f3543" opacity=".6"/><circle cx=${x - 26} cy="0" r="3.500" fill="#7c3f5c" opacity=".6"/>`)}
        <circle cx="1663" cy="20" r="15" fill="#d9aabd"/><path d="M1658 20h10M1663 15v10" stroke="#4f3543" stroke-width="3"/>
        <circle cx="1762" cy="18" r="16" fill="#d6a6bb"/><path d="M1757 18l5 4 5-4" stroke="#7a5767" stroke-width="2" fill="none"/><path d="M1640 0q-6 20 10 30" stroke="#e070b0" stroke-width="2" fill="none" opacity=".7"/>
        <rect x="1780" y="8" width="30" height="22" fill="#d88a88"/>
      </g>
      <ellipse cx="65" cy="13" rx="75" ry="11" fill="#f7e6ea" opacity=".9" filter="url(#b8)"/>
      <path d="M0 25.500H1920" stroke="#ecd8e2"/>
    </svg>`;
  }

  private legendEntry(name: string, color: string, value: string) {
    return html`<div class="entry" style="color:${color}">
      <svg width="15" height="16" viewBox="0 0 15 16"><rect x=".5" y=".5" width="13" height="14" rx="2" fill="#ddd" stroke="#777"/><path d="M3.500 7l3 5L11 2" fill="none" stroke="#111" stroke-width="1.900"/></svg>
      <span>${name}</span>
      <svg width="36" height="17" viewBox="0 0 36 17"><path d="M0 8.500h5M31 8.500h5" stroke=${color} stroke-width="2"/><rect x="6" y="1" width="24" height="15" rx="4" fill="#fff" stroke=${color} stroke-width="2"/><text x="10.500" y="10.500" font-size="9.500" fill="#111">1</text><path d="M15.500 14L20 3" stroke="#111"/><text x="20" y="14" font-size="9.500" fill="#111">6</text></svg>
      <span class=${value.startsWith("-") ? "val" : ""}>${value}</span>
    </div>`;
  }

  render() {
    const tabs = ["SPL & Phase", "All SPL", "Distortion", "Impulse", "Filtered IR", "GD", "RT60", "Clarity", "Decay", "Waterfall", "Spectrogram", "Scope"];
    return html`
      <div class="titlebar">
        ${this.aero()}
        <div class="caption">
          <svg width="20" height="24" viewBox="0 0 20 24"><rect x=".5" y="3.500" width="18.500" height="18" rx="2" fill="#dfe6ee" stroke="#8a9098"/><path d="M10 5q-4 4-1 6t0 4M12 8q-3 2-1 4" fill="none" stroke="#e07020" stroke-width="1.500"/><path d="M4 15.500h10q0 4-5 4t-5-4zM14 16q3 0 1 2.500" fill="none" stroke="#4a6f96" stroke-width="1.200"/></svg>
          REW V5,19
        </div>
        <svg class="winbtns" width="129" height="24" viewBox="0 0 129 24">
          <defs><linearGradient id="wb" x2="0" y2="1"><stop offset="0" stop-color="#d7bcc8"/><stop offset=".48" stop-color="#a98594"/><stop offset=".5" stop-color="#6b4957"/><stop offset="1" stop-color="#9f7f8d"/></linearGradient>
          <linearGradient id="wc" x2="0" y2="1"><stop offset="0" stop-color="#eeb0a0"/><stop offset=".45" stop-color="#d66a50"/><stop offset=".5" stop-color="#b82c10"/><stop offset="1" stop-color="#e0805c"/></linearGradient></defs>
          <path d="M.5 0V18q0 5 5 5H123q5 0 5-5V0z" fill="url(#wb)" stroke="#3b2530"/>
          <path d="M69 0H127V18q0 4-4 4H69z" fill="url(#wc)"/>
          <path d="M1.500 0V17.500q0 4.500 4 4.500H122.500q4 0 4.500-4.500V0M35.500 0V22M68.500 0V22" fill="none" stroke="#e9d5dd" stroke-width=".9"/>
          <rect x="10.500" y="13.500" width="16" height="4" fill="#fff" stroke="#4b4a5c"/>
          <path d="M46.500 2.500h12v12h-3v4h-13v-13h4z" fill="#fff" stroke="#4b4a5c"/><rect x="46.500" y="9.500" width="5" height="5" fill="#9a8490" stroke="#4b4a5c"/><path d="M55.500 14V5.500H46" fill="none" stroke="#4b4a5c" stroke-width=".8"/>
          <path d="M90.500 4.500h5l3 4 3-4h5l-5.500 6.500 5.500 6.500h-5l-3-4-3 4h-5l5.500-6.500z" fill="#fff" stroke="#4b4a5c"/>
        </svg>
      </div>
      <div class="menubar">${["File", "Tools", "Preferences", "Graph", "Help", "Donate"].map((m) => html`<span><u>${m[0]}</u>${m.slice(1)}</span>`)}</div>
      <div class="main">
        <div class="toolbar">
          <div class="tools left">${this.tool("measure", "Measure")}${this.tool("open", "Open")}${this.tool("saveall", "Save All")}${this.tool("removeall", "Remove All")}${this.tool("info", "Info")}</div>
          <div class="tools mid">${this.tool("ir", "IR Windows")}${this.tool("spl", "SPL Meter")}${this.tool("gen", "Generator")}${this.tool("levels", "Levels")}${this.tool("overlays", "Overlays")}${this.tool("rta", "RTA")}${this.tool("eq", "EQ")}${this.tool("room", "Room Sim")}</div>
          <div class="tools right">${this.tool("wrench", "Preferences")}</div>
        </div>
        <div class="body">
          <div class="scroll">
            <div class="arrow"><svg width="8" height="5"><path d="M4 0L8 5H0z" fill="#333"/></svg></div>
            <div class="rail"></div><div class="thumb"></div>
            <div class="arrow down"><svg width="8" height="5"><path d="M0 0H8L4 5z" fill="#333"/></svg></div>
          </div>
          <div class="list">
            <div class="cards">${MEASUREMENTS.map((m) => html`<measurement-card .item=${m} ?open=${m.open}></measurement-card>`)}</div>
            <div class="collapse">Collapse<svg width="17" height="17" viewBox="0 0 17 17"><circle cx="8.500" cy="8.500" r="7.300" fill="#fff" stroke="#555"/><path d="M8 4.500l-4 4 4 4M12 4.500l-4 4 4 4" fill="none" stroke="#222" stroke-width="1.300"/></svg></div>
          </div>
          <div class="pane">
            <div class="header">
              <div class="capture">
                <svg width="30" height="23" viewBox="0 0 30 23"><defs><linearGradient id="cam" x2="0" y2="1"><stop offset="0" stop-color="#f4f4f4"/><stop offset="1" stop-color="#b8b8b8"/></linearGradient></defs><rect x="4" y="1" width="6" height="4" fill="#ddd" stroke="#aaa"/><rect x=".5" y="2.500" width="29" height="18" rx="1.500" fill="url(#cam)" stroke="#999"/><path d="M2 4v15" stroke="#888"/><circle cx="19" cy="12" r="7.500" fill="#ddd" stroke="#999"/><circle cx="19" cy="12" r="4.500" fill="#8a8f96"/><circle cx="19" cy="12" r="2.300" fill="#2a2e36"/><circle cx="20" cy="11" r=".8" fill="#fff"/></svg>
                <span>Capture</span>
              </div>
              <div class="tabs">${tabs.map((t) => html`<div class="tabx ${t === "GD" ? "on" : ""}">${t}</div>`)}</div>
              <div class="views">
                <div class="view"><svg width="38" height="32" viewBox="0 0 38 32"><rect x="8.500" y="4.500" width="28" height="16" fill="#fff" stroke="#333"/><path d="M3.500 4l2.500 3H1zM3.500 21l2.500-3H1zM10 24.500m0-2.500v5l-3-2.500zM33 22l3 2.500-3 2.500z" fill="#222"/><rect x="1.500" y="10.500" width="4" height="4" fill="#888" stroke="#333"/><rect x="17.500" y="22.500" width="9" height="4" fill="#888" stroke="#333"/></svg><span>Scrollbars</span></div>
                <div class="view"><svg width="36" height="32" viewBox="0 0 36 32"><rect x=".5" y="4.500" width="35" height="23" fill="#fff" stroke="#333"/><path d="M13.500 5v22M21.500 5v22M27.500 5v22M31.500 5v22" stroke="#aaa"/></svg><span>Freq. Axis</span></div>
                <div class="view"><svg width="36" height="32" viewBox="0 0 36 32"><rect x=".5" y="4.500" width="35" height="23" fill="#fff" stroke="#333"/><path d="M3 16h30M18 7v18" stroke="#000" stroke-width="1.500"/><path d="M6 13l-3.500 3L6 19M30 13l3.500 3-3.500 3M15 9.500l3-3.500 3 3.500M15 22.500l3 3.500 3-3.500" fill="none" stroke="#000" stroke-width="1.300"/></svg><span>Limits</span></div>
                <div class="view"><svg width="32" height="32" viewBox="0 0 32 32"><rect x="1" y="1" width="30" height="30" rx="3" fill="#bdbdbd" stroke="#777" stroke-width="1.600"/><path d="M2 31h28" stroke="#e8e8e8"/><circle cx="16" cy="16" r="9.500" fill="none" stroke="#7d7d7d" stroke-width="3.500" stroke-dasharray="3 1.970"/><circle cx="16" cy="16" r="8.500" fill="#c8c8c8" stroke="#808080"/><circle cx="16" cy="16" r="4" fill="#ccc" stroke="#777" stroke-width="1.800"/></svg><span>Controls</span></div>
              </div>
            </div>
            <delay-chart></delay-chart>
            <div class="legend">
              ${this.legendEntry("SVS 1tile back [FDW]", "#ff9c00", "35,0 ms")}
              ${this.legendEntry("Min Group Delay", "#888888", "92,8 ms")}
              ${this.legendEntry("Excess Group Delay", "#333333", "-57,7 ms")}
            </div>
          </div>
        </div>
      </div>
      <div class="status"><div class="cell c1">222/495MB</div><div class="cell c2">48000 Hz</div><div class="cell c3">16 Bit</div><div class="cell c4"></div></div>
      <div class="taskbar">
        <svg class="aero" width="1920" height="46"><defs><filter id="g4" x="-5%" y="-50%" width="110%" height="200%"><feGaussianBlur stdDeviation="2.200"/></filter></defs>
          <g filter="url(#g4)" fill="none">
            <path d="M630 8H987V60" stroke="#5f3439" stroke-width="7" opacity=".6"/><path d="M710 6h70" stroke="#4a2e30" stroke-width="9" opacity=".6"/>
            <path d="M630 27H942V60M975 15V60M630 21h330" stroke="#6a363d" stroke-width="4" opacity=".5"/>
            <path d="M952 26V60" stroke="#4a3444" stroke-width="4" opacity=".6"/>
            <ellipse cx="687" cy="18" rx="22" ry="6" fill="#4c3848" opacity=".7"/><ellipse cx="851" cy="18" rx="23" ry="6" fill="#44323f" opacity=".75"/><ellipse cx="649" cy="18" rx="5" ry="5" fill="#4c3848" opacity=".5"/><ellipse cx="724" cy="18" rx="5" ry="6" fill="#4c3848" opacity=".5"/><ellipse cx="814" cy="18" rx="5" ry="5" fill="#4c3848" opacity=".5"/><ellipse cx="887" cy="18" rx="5" ry="6" fill="#4c3848" opacity=".5"/>
            <path d="M690 50q12-12 45-14 35 2 45 14" stroke="#4c3c4c" stroke-width="3" opacity=".6"/><ellipse cx="736" cy="48" rx="20" ry="6" fill="#7e3a40" opacity=".6"/><path d="M800 28l34 20" stroke="#75383c" stroke-width="3" opacity=".7"/>
            <path d="M1200 0q40 20 50 50h100Q1300 20 1280 0z" fill="#bb90ab" opacity=".5"/><path d="M1290 2l26 46" stroke="#6d4656" stroke-width="3" opacity=".8"/><path d="M1500 0L1600 46h-90L1440 0z" fill="#7d5866" opacity=".45"/>
            <path d="M1600 4H1920" stroke="#543540" stroke-width="6" opacity=".45"/>
          </g><path d="M0 .5H1920" stroke="#d9b9c8" opacity=".7"/></svg>
        <div class="apps">
          <div class="app"><svg width="42" height="42" viewBox="0 0 42 42"><defs><radialGradient id="orb" cx=".5" cy=".85" r=".8"><stop offset="0" stop-color="#35d2ff"/><stop offset=".45" stop-color="#1b6da6"/><stop offset="1" stop-color="#153a5c"/></radialGradient></defs><circle cx="21" cy="21" r="20.300" fill="url(#orb)" stroke="#12283c"/><path d="M3 17a19 19 0 0 1 36 0q-18-6-36 0z" fill="#fff" opacity=".4"/>
            <path d="M11 11q5-3 9 0l-2 9q-4-2.500-9 0z" fill="#ee6a30"/><path d="M22 12q5 2.500 13-.5l-3 9q-6 3-12 .5z" fill="#8cc63c"/><path d="M8.500 22q5-2.500 9 0l-2 9q-5-3-9 0z" fill="#3ba4e8"/><path d="M19.500 23q5 2.500 12 0l-3 8.500q-6 3-11 .5z" fill="#fdc52e"/></svg></div>
          <div class="app run first"><svg width="40" height="40" viewBox="0 0 40 40"><path d="M3 6q0-4 4-4h6l2 3h16l1-1h5v30H3z" fill="#e8cf6a" stroke="#c0a040"/><path d="M5 3h5v3H5z" fill="#2f9e56"/><path d="M14 5h5v2h-5z" fill="#e04030"/><path d="M26 7h6v2h-6z" fill="#3a90d8"/><path d="M2 10h36v24q0 3-3 3H4q-2 0-2-3z" fill="#f8e699" stroke="#c9ad50"/><path d="M6 38V28q0-4 4-4h20q4 0 4 4v10h-5v-6H11v6z" fill="#9fd6ee" stroke="#4f9cc4"/></svg></div>
          <div class="app run"><svg width="38" height="38" viewBox="-19 -19 38 38"><circle r="18" fill="#fff"/><path d="M-15.600-9A18 18 0 0 1 15.600-9H0A9 9 0 0 0-7.800-4.500z" fill="#d6473c"/><path d="M15.600-9A18 18 0 0 1 0 18L7.800 4.500A9 9 0 0 0 0-9z" fill="#fccd43"/><path d="M0 18A18 18 0 0 1-15.600-9L-7.800 4.500A9 9 0 0 0 7.800 4.500z" fill="#2e9e58"/><circle r="8.700" fill="#fff"/><circle r="7" fill="#4388ee"/></svg></div>
          <div class="app"><svg width="40" height="40" viewBox="-20 -20 40 40"><defs><linearGradient id="op" x2="0" y2="1"><stop offset="0" stop-color="#ff2a3a"/><stop offset="1" stop-color="#b8061a"/></linearGradient></defs><path fill-rule="evenodd" d="M0-19A19 19 0 1 1 0 19A19 19 0 1 1 0-19zM1-15.500C-5-15.500-8.500-8-8.500 0S-5 15.500 1 15.500 9.500 8 9.500 0 7-15.500 1-15.500z" fill="url(#op)"/></svg></div>
          <div class="app"><svg class="avast" width="38" height="38" viewBox="-19 -19 38 38"><circle r="18.300" fill="#ff7a1c"/><path d="M-11-15A18.300 18.300 0 0 1 17 6Q10-12-11-6z" fill="#6b3fe0"/><path d="M17 6A18.300 18.300 0 0 1-11 14.600Q14 14 12-5z" fill="#f2c21c"/><path d="M-11-5Q0-12 11-5 12 8 0 13-12 8-11-5z" fill="#fff"/><circle cy="-2" r="3" fill="#2a3350"/><path d="M-1.500-1h3l.5 6h-4z" fill="#2a3350"/></svg></div>
          <div class="app run"><svg width="40" height="40" viewBox="0 0 40 40"><path d="M4 4H33L35 37H2z" fill="#f4f4f4" stroke="#aaa"/><path d="M2 34h33v3H2z" fill="#ccc"/><path d="M5 4h28" stroke="#8d7a10" stroke-width="6" stroke-dasharray="2.500 1.500"/><path d="M8 12h23M8 16h22M7 20h22M7 24h14M7 28h18" stroke="#999"/><path d="M15 29l17-10 3 3-17 8z" fill="#d9a13c" stroke="#7c5518"/><circle cx="35" cy="19" r="2.500" fill="#d33"/></svg></div>
          <div class="app run"><svg width="40" height="36" viewBox="0 0 40 36"><rect y="2" width="40" height="10" rx="1" fill="#b81d50"/><rect y="13" width="40" height="11" rx="1" fill="#3f48a8"/><rect y="25" width="40" height="10" rx="1" fill="#1d8a3e"/><path d="M0 5h40M0 16h40M0 28h40" stroke="#fff" opacity=".3" stroke-width="2"/><rect x="14" y="0" width="12" height="36" fill="#b26a25"/><path d="M14 10q6-14 12 0z" fill="#f0b030"/><rect x="13.500" y="17.500" width="13" height="7" rx="2" fill="none" stroke="#eee" stroke-width="2"/><path d="M4.500 4v6M4.500 15v7M4.500 27v6" stroke="#f4c430" stroke-width="3"/></svg></div>
          <div class="app run active"><svg width="40" height="40" viewBox="0 0 40 40"><defs><linearGradient id="sp" x2="0" y2="1"><stop offset="0" stop-color="#1670b8"/><stop offset=".4" stop-color="#16a0c8"/><stop offset=".65" stop-color="#2bd84a"/><stop offset="1" stop-color="#1cb060"/></linearGradient></defs><rect width="40" height="40" fill="#3c0a86"/><path d="M4 37q1-20 3-25 1 12 4 16 4 5 6 2 2-4 3-14 2 8 4 13l2-3 2 4 2-5 2 5 2-5 2 4 2-4 2 3v9q-18 2-36 0z" fill="url(#sp)"/><ellipse cx="9.500" cy="30" rx="4" ry="5.500" fill="#d8e020"/><ellipse cx="21" cy="30" rx="3.200" ry="6" fill="#d8e020"/><ellipse cx="9.500" cy="31" rx="2" ry="3" fill="#f08818"/><ellipse cx="21" cy="30" rx="1.800" ry="4" fill="#f04818"/><text x="1.500" y="14" font-size="15" font-weight="700" fill="#ddd" textLength="37" lengthAdjust="spacingAndGlyphs">REW</text><text x="25" y="21" font-size="6.500" font-weight="700" fill="#ccc">V5.1</text></svg></div>
          <div class="app run last"><svg width="40" height="40" viewBox="0 0 40 40"><path d="M2 24Q3 8 22 7q16 1 15 14-2 15-20 15-8 0-6-6 1-5-4-4-5 2-5-2z" fill="#b7dcf0" stroke="#6aa6c8"/><circle cx="8" cy="21" r="3" fill="#e04a30"/><circle cx="14" cy="15" r="3" fill="#4cb04a"/><circle cx="22" cy="12" r="3" fill="#f0b830"/><circle cx="17" cy="24" r="2.500" fill="#5a3f4a"/><path d="M34 6L22 37" stroke="#d88a3a" stroke-width="3.500"/><path d="M30 6l1-4 8 2-4 7z" fill="#b98a58"/></svg></div>
        </div>
        <div class="tray">
          <div class="lang">EN</div>
          <svg width="145" height="24" viewBox="0 0 145 24">
            <path d="M1 14l4.500-4.500L10 14z" fill="#fff"/>
            <path d="M31.500 2v19" stroke="#fff" stroke-width="2"/><path d="M33.500 3q5-1 7 2h8l-2 4 1 3h-7q-2-2-7-1z" fill="#fff"/>
            <rect x="61" y="5" width="10" height="15" rx="1" fill="#fff" stroke="#fff"/><rect x="64" y="3" width="4" height="2" fill="#fff"/><rect x="62.500" y="7" width="7" height="11" fill="none" stroke="#8a7580"/><path d="M73 3v4M77 3v4M71 7.500h8q0 5-4 5.500v7" stroke="#fff" stroke-width="1.800" fill="none"/>
            <g fill="#fff"><rect x="91" y="17" width="2.500" height="3"/><rect x="94.500" y="15" width="2.500" height="5"/><rect x="98" y="12" width="2.500" height="8"/></g><g fill="#a08a94" stroke="#ddd" stroke-width=".4"><rect x="101.500" y="9" width="2" height="11"/><rect x="104.500" y="6" width="2" height="14"/></g>
            <path d="M119 8h3l6-6v19l-6-6h-3z" fill="#fff"/><path d="M130.500 8q2 3.500 0 7M133.500 6q3.500 5.500 0 11M136 4q5 7.500 0 15" fill="none" stroke="#e8dde2" stroke-width="1.300"/>
          </svg>
          <div class="clock">10:31 μμ<br/>22/1/2022</div>
          <div class="desk"></div>
        </div>
      </div>`;
  }
}
